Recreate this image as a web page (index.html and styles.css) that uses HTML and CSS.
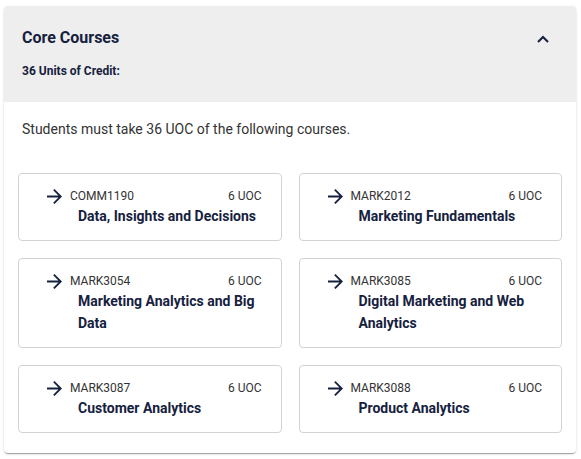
FILE: index.html
```html
<!DOCTYPE html>
<html>
<head>
<meta charset="utf-8">
<link rel="stylesheet" href="styles.css">
</head>
<body>
<div class="wrap">
  <section class="panel">
    <header class="head">
      <div class="head-text">
        <h2 class="title">Core Courses</h2>
        <div class="sub">36 Units of Credit:</div>
      </div>
      <svg class="chev" viewBox="0 0 12 8" width="12" height="8"><path d="M1 7 L6 2 L11 7" fill="none" stroke="#16213e" stroke-width="2"/></svg>
    </header>
    <div class="body">
      <p class="desc">Students must take 36 UOC of the following courses.</p>
      <div class="grid">
        <div class="card">
          <div class="top"><svg class="arrow" viewBox="4 4 16 16"><path d="M12 4l-1.41 1.41L16.17 11H4v2h12.17l-5.58 5.59L12 20l8-8z" fill="#16213e"/></svg><span class="code">COMM1190</span><span class="uoc">6 UOC</span></div>
          <div class="name">Data, Insights and Decisions</div>
        </div>
        <div class="card">
          <div class="top"><svg class="arrow" viewBox="4 4 16 16"><path d="M12 4l-1.41 1.41L16.17 11H4v2h12.17l-5.58 5.59L12 20l8-8z" fill="#16213e"/></svg><span class="code">MARK2012</span><span class="uoc">6 UOC</span></div>
          <div class="name">Marketing Fundamentals</div>
        </div>
        <div class="card">
          <div class="top"><svg class="arrow" viewBox="4 4 16 16"><path d="M12 4l-1.41 1.41L16.17 11H4v2h12.17l-5.58 5.59L12 20l8-8z" fill="#16213e"/></svg><span class="code">MARK3054</span><span class="uoc">6 UOC</span></div>
          <div class="name">Marketing Analytics and Big Data</div>
        </div>
        <div class="card">
          <div class="top"><svg class="arrow" viewBox="4 4 16 16"><path d="M12 4l-1.41 1.41L16.17 11H4v2h12.17l-5.58 5.59L12 20l8-8z" fill="#16213e"/></svg><span class="code">MARK3085</span><span class="uoc">6 UOC</span></div>
          <div class="name">Digital Marketing and Web Analytics</div>
        </div>
        <div class="card">
          <div class="top"><svg class="arrow" viewBox="4 4 16 16"><path d="M12 4l-1.41 1.41L16.17 11H4v2h12.17l-5.58 5.59L12 20l8-8z" fill="#16213e"/></svg><span class="code">MARK3087</span><span class="uoc">6 UOC</span></div>
          <div class="name">Customer Analytics</div>
        </div>
        <div class="card">
          <div class="top"><svg class="arrow" viewBox="4 4 16 16"><path d="M12 4l-1.41 1.41L16.17 11H4v2h12.17l-5.58 5.59L12 20l8-8z" fill="#16213e"/></svg><span class="code">MARK3088</span><span class="uoc">6 UOC</span></div>
          <div class="name">Product Analytics</div>
        </div>
      </div>
    </div>
  </section>
</div>
</body>
</html>
```

FILE: styles.css
```css
* { box-sizing: border-box; }
html, body { margin: 0; padding: 0; background: #fff; }
body { font-family: Roboto, "Liberation Sans", Arial, sans-serif; color: #333; }
.wrap { padding: 6px 5px 6px 4px; }
.panel {
  width: 572px;
  background: #fff;
  border-radius: 4px;
  box-shadow: 0 2px 1px -1px rgba(0,0,0,0.2), 0 1px 1px 0 rgba(0,0,0,0.14), 0 1px 3px 0 rgba(0,0,0,0.12);
  overflow: hidden;
}
.head {
  background: #eeeeee;
  height: 96px;
  padding: 20px 27px 0 18px;
  display: flex;
  justify-content: space-between;
  align-items: flex-start;
}
.title {
  margin: 0;
  font-size: 16px;
  line-height: 24px;
  font-weight: 700;
  color: #16213e;
}
.sub {
  margin-top: 13px;
  font-size: 12px;
  line-height: 16px;
  font-weight: 700;
  color: #16213e;
}
.chev { margin-top: 9px; }
.body { padding: 17px 14px 20px 14px; }
.desc {
  margin: 0 0 33px 4px;
  font-size: 14px;
  line-height: 21px;
  color: #333;
}
.grid {
  display: grid;
  grid-template-columns: 1fr 1fr;
  gap: 17px;
}
.card {
  border: 1px solid #d3d3d3;
  border-radius: 4px;
  padding: 14px 19px 13px 28px;
}
.top {
  display: flex;
  align-items: center;
  height: 16px;
  font-size: 12px;
  color: #333;
}
.arrow { width: 15px; height: 15px; margin-right: 8px; flex: none; }
.code { flex: 1; }
.uoc { flex: none; }
.name {
  padding-left: 31px;
  margin-top: 1px;
  font-size: 14px;
  line-height: 22px;
  font-weight: 700;
  color: #16213e;
}
```
